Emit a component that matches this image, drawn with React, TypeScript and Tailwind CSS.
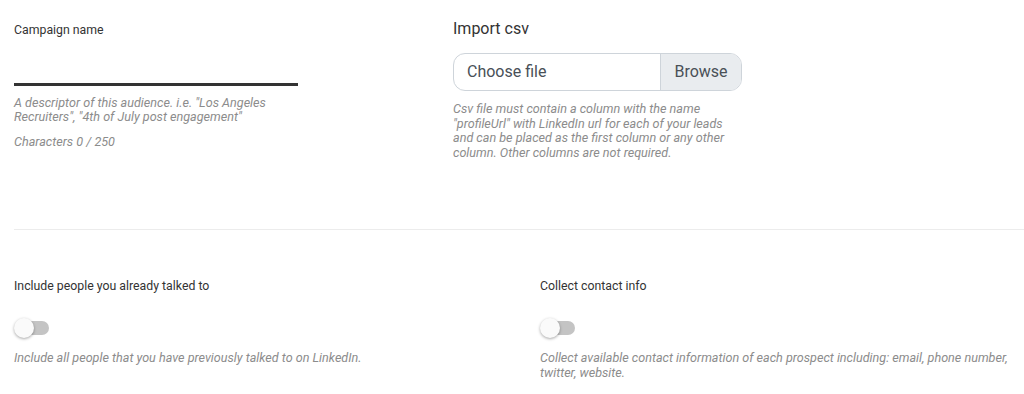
import React, { useState } from 'react';

const Toggle: React.FC<{ on: boolean; onChange: () => void }> = ({ on, onChange }) => (
    <button type="button" onClick={onChange} className="relative block w-[36px] h-[20px]">
        <span className={`absolute left-[1px] top-[3px] w-[34px] h-[14px] rounded-full ${on ? 'bg-[#90caf9]' : 'bg-[#c4c4c4]'}`} />
        <span
            className={`absolute top-0 w-[20px] h-[20px] rounded-full shadow-[0_1px_3px_rgba(0,0,0,0.35)] ${on ? 'left-[16px] bg-[#1976d2]' : 'left-0 bg-[#fafafa]'}`}
        />
    </button>
);

const App: React.FC = () => {
    const [name, setName] = useState('');
    const [talked, setTalked] = useState(false);
    const [contact, setContact] = useState(false);

    return (
        <div className="w-[1024px] h-[394px] overflow-hidden bg-white font-['Roboto',sans-serif] text-[#333]">
            {/* top section */}
            <div className="flex pl-[14px] h-[229px]">
                <div className="w-[439px] pt-[22px]">
                    <label className="block text-[12.3px] leading-[16px]">Campaign name</label>
                    <input
                        value={name}
                        onChange={e => setName(e.target.value)}
                        maxLength={250}
                        className="block w-[284px] h-[48px] border-b-[3px] border-[#333] outline-none text-[14px]"
                    />
                    <p className="mt-[10px] w-[284px] text-[12.6px] leading-[14px] italic text-[#8c8c8c]">
                        A descriptor of this audience. i.e. "Los Angeles Recruiters", "4th of July post engagement"
                    </p>
                    <p className="mt-[11px] text-[12.6px] leading-[14px] italic text-[#8c8c8c]">
                        Characters {name.length} / 250
                    </p>
                </div>
                <div className="w-[289px] pt-[19px]">
                    <h3 className="text-[16px] leading-[20px]">Import csv</h3>
                    <label className="mt-[14px] flex h-[38px] rounded-[12px] border border-[#ced4da] overflow-hidden text-[16px] text-[#495057] cursor-pointer">
                        <span className="flex-1 flex items-center pl-[13px]">Choose file</span>
                        <span className="w-[81px] flex items-center justify-center bg-[#e9ecef] border-l border-[#ced4da]">Browse</span>
                        <input type="file" accept=".csv" className="hidden" />
                    </label>
                    <p className="mt-[11px] text-[12.6px] leading-[14.5px] italic text-[#8c8c8c]">
                        Csv file must contain a column with the name "profileUrl" with LinkedIn url for each of your leads and can be placed as the first column or any other column. Other columns are not required.
                    </p>
                </div>
            </div>

            <div className="ml-[14px] border-t border-[#ececec]" />

            {/* bottom section */}
            <div className="flex pl-[14px] pt-[48px]">
                <div className="w-[526px]">
                    <div className="text-[12.3px] leading-[16px]">Include people you already talked to</div>
                    <div className="mt-[24px]">
                        <Toggle on={talked} onChange={() => setTalked(!talked)} />
                    </div>
                    <p className="mt-[12px] text-[12.6px] leading-[15px] italic text-[#8c8c8c]">
                        Include all people that you have previously talked to on LinkedIn.
                    </p>
                </div>
                <div className="w-[484px]">
                    <div className="text-[12.3px] leading-[16px]">Collect contact info</div>
                    <div className="mt-[24px]">
                        <Toggle on={contact} onChange={() => setContact(!contact)} />
                    </div>
                    <p className="mt-[12px] text-[12.6px] leading-[15px] italic text-[#8c8c8c]">
                        Collect available contact information of each prospect including: email, phone number, twitter, website.
                    </p>
                </div>
            </div>
        </div>
    );
};

export default App;
